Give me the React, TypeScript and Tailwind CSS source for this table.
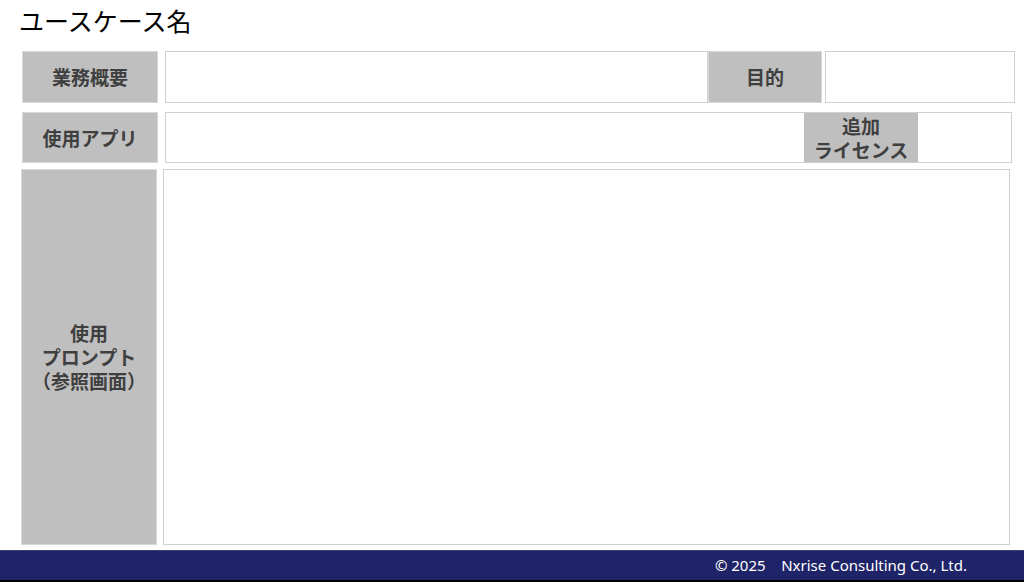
const jp = { fontFamily: '"Noto Sans CJK JP", "Noto Sans", sans-serif' };

function Label({ children, className = "" }: { children: React.ReactNode; className?: string }) {
  return (
    <div
      className={`flex items-center justify-center border border-[#d9d9d9] bg-[#bfbfbf] text-center text-[19px] leading-[24px] font-bold text-[#3f3f3f] ${className}`}
      style={jp}
    >
      {children}
    </div>
  );
}

export default function App() {
  return (
    <div className="flex h-[582px] w-[1024px] flex-col overflow-hidden bg-white">
      {/* Title */}
      <h1 className="h-[51px] pt-[1px] pl-[19px] text-[25px] leading-[38px] font-normal text-black" style={jp}>
        ユースケース名
      </h1>

      {/* Row 1 */}
      <div className="flex h-[52px] pl-[22px]">
        <Label className="w-[136px]">業務概要</Label>
        <div className="ml-[7px] w-[543px] border border-[#d0d0d0] bg-white" />
        <Label className="w-[114px]">目的</Label>
        <div className="ml-[3px] w-[190px] border border-[#d0d0d0] bg-white" />
      </div>

      {/* Row 2 */}
      <div className="mt-[9px] flex h-[51px] pl-[22px]">
        <Label className="w-[136px]">使用アプリ</Label>
        <div className="ml-[7px] flex w-[847px] border border-[#d0d0d0] bg-white">
          <div className="flex-1" />
          <Label className="w-[114px] border-0 leading-[22px]">
            追加
            <br />
            ライセンス
          </Label>
          <div className="w-[93px]" />
        </div>
      </div>

      {/* Row 3 */}
      <div className="mt-[6px] flex h-[376px] pl-[21px]">
        <Label className="w-[136px] leading-[24px]">
          使用
          <br />
          プロンプト
          <br />
          （参照画面）
        </Label>
        <div className="ml-[6px] w-[847px] border border-[#d0d0d0] bg-white" />
      </div>

      {/* Footer */}
      <footer className="mt-[5px] flex h-[32px] items-center justify-end border-t border-[#3a3f7a] border-b-2 border-b-black bg-[#1f2468] pr-[57px]">
        <span
          className="text-[15px] whitespace-pre text-white"
          style={{ fontFamily: '"Noto Sans", "Open Sans", sans-serif' }}
        >
          {"© 2025    Nxrise Consulting Co., Ltd."}
        </span>
      </footer>
    </div>
  );
}
